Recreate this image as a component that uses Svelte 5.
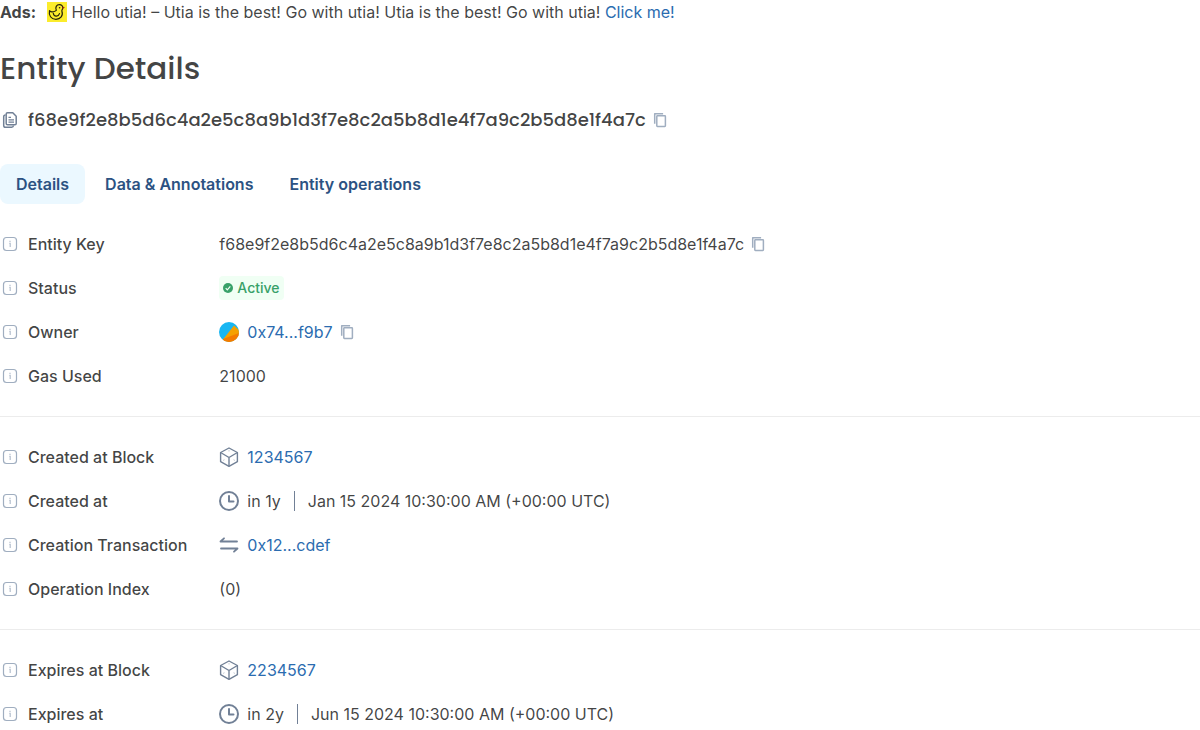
<script>
  const hash = 'f68e9f2e8b5d6c4a2e5c8a9b1d3f7e8c2a5b8d1e4f7a9c2b5d8e1f4a7c';
  const tabs = ['Details', 'Data & Annotations', 'Entity operations'];
  let active = $state('Details');

  const groups = [
    [
      { label: 'Entity Key', text: hash, copy: true },
      { label: 'Status', status: 'Active' },
      { label: 'Owner', icon: 'avatar', link: '0x74...f9b7', copy: true },
      { label: 'Gas Used', text: '21000' }
    ],
    [
      { label: 'Created at Block', icon: 'block', link: '1234567' },
      { label: 'Created at', icon: 'clock', text: 'in 1y', date: 'Jan 15 2024 10:30:00 AM (+00:00 UTC)' },
      { label: 'Creation Transaction', icon: 'tx', link: '0x12...cdef' },
      { label: 'Operation Index', text: '(0)' }
    ],
    [
      { label: 'Expires at Block', icon: 'block', link: '2234567' },
      { label: 'Expires at', icon: 'clock', text: 'in 2y', date: 'Jun 15 2024 10:30:00 AM (+00:00 UTC)' }
    ]
  ];

  function copy(text) {
    navigator.clipboard?.writeText(text);
  }
</script>

{#snippet copyButton(text)}
  <button class="copy" aria-label="Copy" onclick={() => copy(text)}>
    <svg viewBox="0 0 20 20" width="20" height="20" fill="none" stroke="currentColor" stroke-width="1.5" stroke-linejoin="round">
      <rect x="6.8" y="5.8" width="8.6" height="10.6" rx=".6" />
      <path d="M4.700 13.800V3.700h8.400" />
    </svg>
  </button>
{/snippet}

{#snippet icon(name)}
  {#if name === 'avatar'}
    <svg class="icon" viewBox="0 0 20 20" aria-hidden="true">
      <clipPath id="disc"><circle cx="10" cy="10" r="10" /></clipPath>
      <g clip-path="url(#disc)">
        <path fill="#18b6f2" d="M0 0h20v20H0z" />
        <path fill="#f5a100" d="M4 17.500 15 3.500l6 5.500v13H6z" />
        <path fill="#f47b00" d="m4 17 17-6.500V22H4z" />
      </g>
    </svg>
  {:else if name === 'block'}
    <svg class="icon" viewBox="0 0 20 20" fill="none" stroke="currentColor" stroke-width="1.400" stroke-linejoin="round" aria-hidden="true">
      <path d="m10 1 8.400 4.500v9.200L10 19.300l-8.400-4.600V5.500z" />
      <path d="m1.600 5.500 8.400 5 8.400-5M10 10.500v8.800" />
      <path d="M10 3v1.500M4 13.500l1.500-.8m10.500.8-1.500-.8" stroke-width="1" opacity=".4" />
    </svg>
  {:else if name === 'clock'}
    <svg class="icon" viewBox="0 0 20 20" fill="none" stroke="currentColor" stroke-width="2" stroke-linecap="round" stroke-linejoin="round" aria-hidden="true">
      <circle cx="10" cy="10" r="9" />
      <path d="M10 5v5.500h4.500" />
    </svg>
  {:else}
    <svg class="icon" viewBox="0 0 20 20" fill="none" stroke="currentColor" stroke-width="1.800" stroke-linecap="round" stroke-linejoin="round" aria-hidden="true">
      <path d="M18 6.500H1.500L5 3.300M2 13.500h16.500L15 16.700" />
    </svg>
  {/if}
{/snippet}

<main>
  <div class="ads">
    <strong>Ads:</strong>
    <p>
      <svg class="duck" viewBox="0 0 20 20" aria-hidden="true">
        <path fill="#fbec2c" d="M0 0h20v20H0z" />
        <g fill="none" stroke="#25220b" stroke-width="1.200" stroke-linecap="round" stroke-linejoin="round">
          <path d="M9.300 8.300C8 5.500 9.500 2.600 12.300 2.600c2.300 0 3.800 1.700 3.400 3.700-.2 1.200-1.200 1.900-.8 3 1.600 4.300-1.400 8-6 8-4.800 0-7.400-4-6.400-8.600 1 1.300 2.500 1.500 4 1 1-.3 2-.6 2.800-1.400z" />
          <path d="M6.300 11.300c.5 3.400 5 3.900 6.200.3" />
        </g>
        <circle cx="12.600" cy="5.700" r=".8" fill="#25220b" />
        <path fill="#a22b10" d="m15.300 4.700 2.700.3-2.400 2.300z" />
      </svg>
      Hello utia! – Utia is the best! Go with utia! Utia is the best! Go with utia! <a href="#ad">Click me!</a>
    </p>
  </div>

  <h1>Entity Details</h1>

  <div class="entity">
    <svg class="icon" viewBox="0 0 20 20" fill="none" stroke="currentColor" stroke-width="1.500" stroke-linejoin="round" aria-hidden="true">
      <path d="M7.500 2.800h5.300l3.400 3.400v7.300q0 1.300-1.300 1.300H7.500q-1.300 0-1.300-1.300V4.100q0-1.300 1.300-1.300z" />
      <path d="M5.500 5q-1.800 0-1.800 1.800v8.600q0 1.800 1.800 1.800h6.200q1.600 0 1.800-1.700" />
      <path d="M8.500 7.400h2.500M8.500 9.800h5.500M8.500 12.200h5.500" stroke-width="1.200" />
    </svg>
    <h2>{hash}</h2>
    {@render copyButton(hash)}
  </div>

  <div class="tabs" role="tablist">
    {#each tabs as tab}
      <button role="tab" class="tab" class:active={active === tab} aria-selected={active === tab} onclick={() => (active = tab)}>{tab}</button>
    {/each}
  </div>

  <dl>
    {#each groups as rows, g}
      {#if g > 0}<div class="divider"></div>{/if}
      {#each rows as row}
        <div class="row">
          <dt>
            <svg class="info" viewBox="0 0 20 20" fill="none" stroke="currentColor" aria-hidden="true">
              <rect x="3.500" y="3.500" width="13" height="13" rx="3" stroke-width="1.200" />
              <path d="M9.300 9.300h.9v3.700M10 6.800v1.200" stroke-width="1.200" opacity=".8" />
            </svg>
            {row.label}
          </dt>
          <dd>
            {#if row.icon}{@render icon(row.icon)}{/if}
            {#if row.status}
              <span class="badge">
                <svg viewBox="0 0 10 10" width="10" height="10" aria-hidden="true">
                  <circle cx="5" cy="5" r="5" fill="#38a169" />
                  <path d="m2.700 5.200 1.600 1.600 3-3.400" fill="none" stroke="#f0fff4" stroke-width="1.200" />
                </svg>
                {row.status}
              </span>
            {/if}
            {#if row.link}<a href="#{row.link}">{row.link}</a>{/if}
            {#if row.text}<span>{row.text}</span>{/if}
            {#if row.date}
              <span class="bar"></span>
              <span>{row.date}</span>
            {/if}
            {#if row.copy}{@render copyButton(row.link ?? row.text)}{/if}
          </dd>
        </div>
      {/each}
    {/each}
  </dl>
</main>

<style>
  :global(body) {
    margin: 0;
    background: #fff;
  }
  main {
    font: 400 16px/24px Inter, sans-serif;
    color: rgba(16, 17, 18, 0.8);
  }
  h1, h2, p, dl, dd {
    margin: 0;
  }
  a {
    color: #2b6cb0;
    text-decoration: none;
  }
  button {
    border: 0;
    padding: 0;
    background: none;
    font: inherit;
    cursor: pointer;
  }
  .ads {
    display: flex;
    gap: 11px;
  }
  .ads strong {
    font-weight: 700;
  }
  .duck {
    width: 20px;
    height: 20px;
    vertical-align: -4px;
  }
  h1 {
    margin-top: 24px;
    font: 500 31px/40px Poppins, Inter, sans-serif;
  }
  .entity {
    display: flex;
    align-items: center;
    gap: 8px;
    margin-top: 16px;
    height: 32px;
  }
  h2 {
    font: 500 18px/32px Poppins, Inter, sans-serif;
  }
  .icon, .info {
    flex: none;
    width: 20px;
    height: 20px;
    color: #718096;
  }
  .info {
    color: #a0aec0;
  }
  .copy {
    display: flex;
    color: #a0aec0;
    margin-left: -4px;
  }
  .tabs {
    display: flex;
    gap: 4px;
    margin-top: 28px;
  }
  .tab {
    padding: 8px 16px;
    border-radius: 8px;
    font-weight: 600;
    color: #2c5282;
  }
  .tab.active {
    background: #ebf8ff;
  }
  dl {
    display: grid;
    grid-template-columns: max-content 1fr;
    gap: 20px 32px;
    margin-top: 28px;
  }
  .row {
    display: contents;
  }
  dt, dd {
    display: flex;
    align-items: center;
    gap: 8px;
    height: 24px;
  }
  dt {
    font-weight: 500;
  }
  .divider {
    grid-column: 1 / -1;
    height: 1px;
    margin: 8px 0;
    background: rgba(16, 17, 18, 0.08);
  }
  .badge {
    display: flex;
    align-items: center;
    gap: 4px;
    padding: 0 4px;
    border-radius: 4px;
    background: #f0fff4;
    color: #38a169;
    font-size: 14px;
    font-weight: 500;
  }
  .bar {
    width: 1px;
    height: 20px;
    margin: 0 5px;
    background: #718096;
  }
</style>
